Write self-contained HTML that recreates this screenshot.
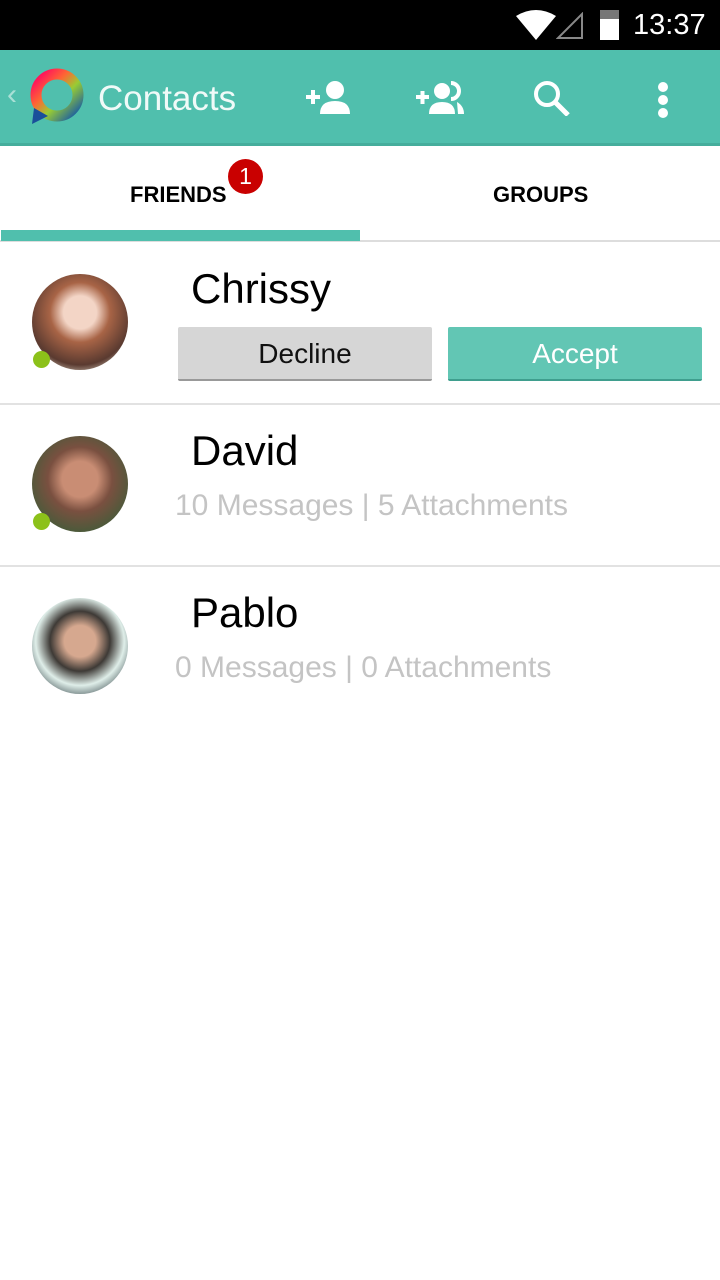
<!DOCTYPE html>
<html><head><meta charset="utf-8"><style>
*{margin:0;padding:0;box-sizing:border-box}
body{width:720px;height:1280px;background:#fff;font-family:"Liberation Sans",sans-serif;position:relative;overflow:hidden}
.abs{position:absolute}
.status{top:0;left:0;width:720px;height:50px;background:#000;color:#fff}
.bar{top:50px;left:0;width:720px;height:96px;background:#50bfad;border-bottom:3px solid #45ad9c}
.tabs{top:146px;left:0;width:720px;height:96px;background:#fff;border-bottom:2px solid #ddd}
.tab{font-weight:bold;font-size:22px;top:182px}
.name{font-size:42px;color:#000;left:191px}
.sub{font-size:30px;color:#c4c4c4;left:175px}
.av{width:96px;height:96px;border-radius:50%;left:32px}
.dot{width:17px;height:17px;border-radius:50%;background:#8cc11a;left:33px}
.sep{left:0;width:720px;height:2px;background:#e2e2e2}
.btn{height:54px;top:327px;font-size:28px;text-align:center;line-height:54px;border-radius:2px}
</style></head><body>
<div class="abs status">
 <svg class="abs" style="left:516px;top:10px" width="40" height="30"><path d="M0 6 Q20 -6 40 6 L20 30Z" fill="#fff"/></svg>
 <svg class="abs" style="left:556px;top:12px" width="28" height="28"><path d="M26 2 L26 26 L2 26Z" fill="none" stroke="#888" stroke-width="2"/></svg>
 <div class="abs" style="left:600px;top:10px;width:19px;height:30px;background:#fff;border-top:9px solid #777"></div>
 <div class="abs" style="left:633px;top:9px;font-size:29px">13:37</div>
</div>
<div class="abs bar">
 <div class="abs" style="left:7px;top:28px;color:#a9e0d6;font-size:30px">&#8249;</div>
 <svg class="abs" style="left:28px;top:18px" width="58" height="58"><defs><linearGradient id="g" x1="0" y1="0" x2="1" y2="1"><stop offset="0" stop-color="#f06"/><stop offset=".35" stop-color="#f63"/><stop offset=".6" stop-color="#9c3"/><stop offset="1" stop-color="#15a"/></linearGradient></defs><circle cx="29" cy="27" r="21" fill="none" stroke="url(#g)" stroke-width="11"/><path d="M6 40 L4 56 L20 48Z" fill="#1a4f9a"/></svg>
 <div class="abs" style="left:98px;top:29px;color:#f0faf8;font-size:35px">Contacts</div>
 <svg class="abs" style="left:304px;top:30px" width="48" height="36"><path d="M2 17h14M9 10v14" stroke="#fff" stroke-width="4"/><circle cx="31" cy="10" r="9" fill="#fff"/><path d="M16 34 Q16 21 31 21 Q46 21 46 34Z" fill="#fff"/></svg>
 <svg class="abs" style="left:414px;top:30px" width="52" height="36"><path d="M2 17h13M8.5 11v13" stroke="#fff" stroke-width="4"/><circle cx="28" cy="11" r="8" fill="#fff"/><path d="M15 34 Q15 22 28 22 Q41 22 41 34Z" fill="#fff"/><path d="M37 3 A8 8 0 0 1 37 19" stroke="#fff" stroke-width="4" fill="none"/><path d="M43 22 Q50 26 50 34 h-6" fill="#fff"/></svg>
 <svg class="abs" style="left:532px;top:30px" width="40" height="36"><circle cx="15" cy="14" r="11" stroke="#fff" stroke-width="4" fill="none"/><path d="M23 22 L36 35" stroke="#fff" stroke-width="5"/></svg>
 <div class="abs" style="left:658px;top:32px;width:10px"><div style="width:10px;height:10px;border-radius:50%;background:#fff;margin-bottom:3px"></div><div style="width:10px;height:10px;border-radius:50%;background:#fff;margin-bottom:3px"></div><div style="width:10px;height:10px;border-radius:50%;background:#fff"></div></div>
</div>
<div class="abs tabs"></div>
<div class="abs tab" style="left:130px">FRIENDS</div>
<div class="abs tab" style="left:493px">GROUPS</div>
<div class="abs" style="left:228px;top:159px;width:35px;height:35px;border-radius:50%;background:#c90000;color:#fff;font-size:23px;text-align:center;line-height:35px">1</div>
<div class="abs" style="left:1px;top:230px;width:359px;height:11px;background:#50bfad"></div>

<div class="abs av" style="top:274px;background:radial-gradient(circle at 50% 40%,#f3d5c6 0 22%,#a86446 40%,#5a3a30 70%,#e8e0d0 90%)"></div>
<div class="abs dot" style="top:351px"></div>
<div class="abs name" style="top:265px">Chrissy</div>
<div class="abs btn" style="left:178px;width:254px;background:#d6d6d6;border-bottom:2px solid #999;color:#111">Decline</div>
<div class="abs btn" style="left:448px;width:254px;background:#62c6b4;border-bottom:2px solid #3f9e8e;color:#fff">Accept</div>
<div class="abs sep" style="top:403px"></div>

<div class="abs av" style="top:436px;background:radial-gradient(circle at 50% 45%,#c98d74 0 25%,#7a5040 45%,#4a5a3a 75%,#9aa080)"></div>
<div class="abs dot" style="top:513px"></div>
<div class="abs name" style="top:427px">David</div>
<div class="abs sub" style="top:489px">10 Messages | 5 Attachments</div>
<div class="abs sep" style="top:565px"></div>

<div class="abs av" style="top:598px;background:radial-gradient(circle at 50% 45%,#d6a88f 0 22%,#3e3a36 42%,#dfeee9 62%,#1a2a30 90%)"></div>
<div class="abs name" style="top:589px">Pablo</div>
<div class="abs sub" style="top:651px">0 Messages | 0 Attachments</div>
</body></html>
